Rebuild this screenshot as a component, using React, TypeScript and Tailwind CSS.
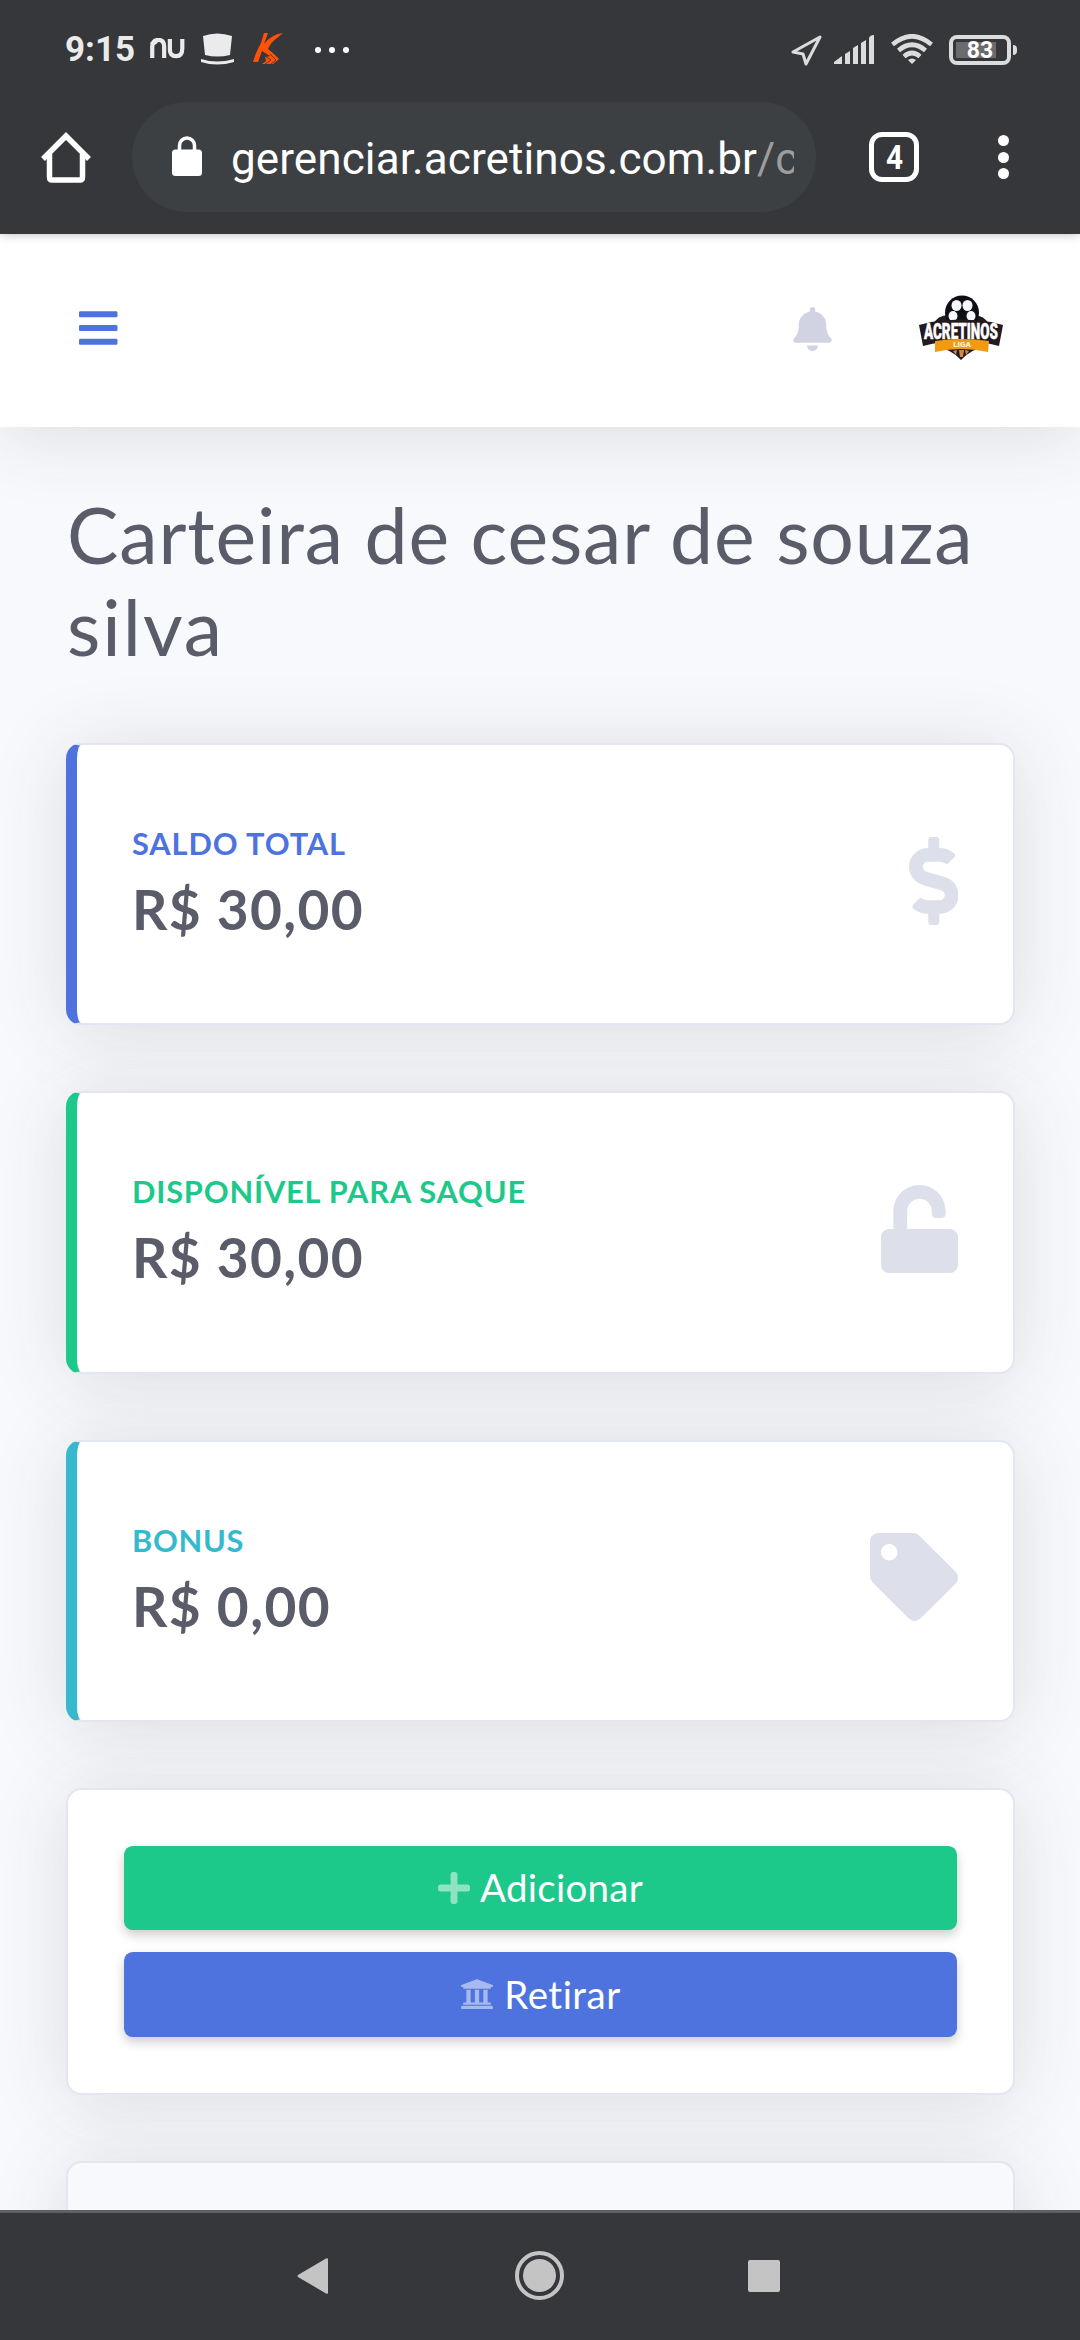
import React from "react";
import { FaBars, FaBell, FaDollarSign, FaUnlock, FaTag, FaPlus, FaUniversity } from "react-icons/fa";

const Fit = ({ text, w, className }: { text: string; w: number; className: string }) => {
  const ref = React.useRef<HTMLSpanElement>(null);
  const [ls, setLs] = React.useState(0);
  React.useLayoutEffect(() => {
    if (ref.current) setLs((w - ref.current.getBoundingClientRect().width) / text.length);
  }, []);
  return (
    <span ref={ref} className={"inline-block whitespace-pre " + className} style={{ letterSpacing: ls }}>
      {text}
    </span>
  );
};

function StatusBar() {
  return (
    <div className="flex h-[99px] items-center pl-[65px] pr-[63px] text-[#ebebeb]">
      <Fit text="9:15" w={70} className="text-[35px] leading-none font-bold" />
      <svg className="-mt-[2px] ml-[14px] h-[21px] w-[37px]" viewBox="0 0 37 22" fill="none" stroke="currentColor">
        <path d="M2.500 21V10Q2.500 2 9 2Q15 2 15 9V21M1 7Q6 5 9 1" strokeWidth="4.400" />
        <path d="M21 1V12Q21 19 27.500 19Q34 19 34 11V1" strokeWidth="4.400" />
      </svg>
      <svg className="-mt-[1px] ml-[15px] h-8 w-[33px]" viewBox="0 0 33 32" fill="currentColor">
        <path d="M2 3Q16-2 31 3L29 22Q16 25 4 22Z" />
        <path d="M0 26Q16 31 33 26V29Q16 34 0 29Z" />
      </svg>
      <svg className="-mt-[1px] ml-[19px] h-8 w-[31px]" viewBox="0 0 31 32" fill="#ff5207">
        <path d="M11 0L15 0L11 11Q19 1 30 0L24 5Q18 9 15 16L21 21L26 26L20 31H9L13 28L12 24L17 23L9 18L5 29H0L3 20L8 10Z" />
        <path d="M12 23L18 27L12 31M17 21L23 27L18 31" stroke="#36373b" strokeWidth="0.800" fill="none" />
      </svg>
      <div className="ml-[31px] flex gap-2">
        <i className="size-[6px] rounded-full bg-white" />
        <i className="size-[6px] rounded-full bg-white" />
        <i className="size-[6px] rounded-full bg-white" />
      </div>
      <div className="ml-auto flex items-center">
        <svg className="h-8 w-8" viewBox="0 0 32 32" fill="none" stroke="#dcdcdc" strokeWidth="3" strokeLinejoin="round">
          <path d="M30 3L3 18L13 20L16 30Z" />
        </svg>
        <svg className="ml-3 h-[30px] w-[41px]" viewBox="0 0 41 30" fill="#dcdcdc">
          <path d="M0 27L8 21V29H0ZM11 19L16 16V29H11ZM19 13L24 10V29H19ZM27 8L32 5V29H27ZM35 3Q36 0 40 0V29H35Z" />
        </svg>
        <svg className="ml-4 h-[31px] w-[42px]" viewBox="0 0 42 31" fill="none" stroke="#dcdcdc" strokeWidth="4.600">
          <path d="M1.500 10.500Q21-6 40.500 10.500M7.500 16.500Q21 5 34.500 16.500M13 22.500Q21 15.500 29 22.500" />
          <path d="M17 26Q21 23 25 26L21 30Z" fill="#dcdcdc" stroke="none" />
        </svg>
        <div className="ml-4 flex h-[30px] w-[62px] items-center rounded-[8px] border-4 border-[#dcdcdc] p-[3px]">
          <div className="flex h-4 w-10 items-center justify-center bg-[#6b6b6d] pt-[2px] pl-[8px] text-[23px] leading-none font-bold text-white">
            83
          </div>
        </div>
        <i className="ml-[2px] h-[10px] w-1 rounded-r bg-[#dcdcdc]" />
      </div>
    </div>
  );
}

function BrowserBar() {
  return (
    <div className="flex h-[135px] items-start pt-[3px] text-white">
      <svg className="mt-[30px] ml-[41px] h-[51px] w-[50px]" viewBox="0 0 50 51" fill="none" stroke="white" strokeWidth="5.500">
        <path d="M2 27L25 4L48 27" />
        <path d="M8.500 22V45Q8.500 48 11 48H39Q41.500 48 41.500 45V22" />
      </svg>
      <div className="ml-[41px] flex h-[110px] w-[684px] items-center rounded-full bg-[#3c4043] pt-[2px] pl-[40px]">
        <svg className="-mt-[4px] h-10 w-[30px]" viewBox="0 0 30 40">
          <rect y="13.500" width="30" height="26.500" rx="3.500" fill="white" />
          <path d="M7.500 15V9.500A7.500 7.500 0 0 1 22.500 9.500V15" fill="none" stroke="white" strokeWidth="3.500" />
        </svg>
        <div className="ml-[29px] flex h-[60px] w-[563px] items-center overflow-hidden pt-[2px] text-[44px] leading-none">
          <Fit text="gerenciar.acretinos.com.br" w={526} className="" />
          <span className="text-[#9b9d9f]">/c</span>
        </div>
      </div>
      <div className="mt-[30px] ml-[53px] flex h-[50px] w-[50px] items-center justify-center rounded-[13px] border-[5.500px] border-white text-[33px] leading-none font-bold">
        <span className="scale-x-90">4</span>
      </div>
      <div className="mt-[33px] ml-[79px] flex flex-col gap-[5.500px]">
        <i className="size-[11px] rounded-full bg-white" />
        <i className="size-[11px] rounded-full bg-white" />
        <i className="size-[11px] rounded-full bg-white" />
      </div>
    </div>
  );
}

function Crest() {
  return (
    <svg className="h-[66px] w-[84px]" viewBox="0 0 84 66">
      <path d="M14 30Q18 20 30 20H54Q66 20 70 30L66 52Q52 54 42 65Q32 54 18 52Z" fill="#231a20" />
      <circle cx="43" cy="17.500" r="17" fill="#0e0f14" />
      <g fill="#f4f7fb">
        <ellipse cx="37.500" cy="10.500" rx="5" ry="5.500" />
        <ellipse cx="48.500" cy="10.500" rx="5" ry="5.500" />
        <ellipse cx="34" cy="21" rx="4.500" ry="5" />
        <ellipse cx="52" cy="21" rx="4.500" ry="5" />
      </g>
      <path d="M0 30L12 27Q42 22 72 27L84 30L80 51Q42 41 4 51Z" fill="#231a20" />
      <text x="42" y="43.500" textAnchor="middle" textLength="74" lengthAdjust="spacingAndGlyphs" fontSize="22" fontWeight="900" fill="white" stroke="white" strokeWidth="0.500" fontFamily="Roboto">ACRETINOS</text>
      <path d="M16 46Q42 42 70 46L69 57Q42 51 16 57Z" fill="#f39a13" />
      <text x="43" y="52" textAnchor="middle" fontSize="8" fontWeight="900" fill="#fff2cf" fontFamily="Roboto">LIGA</text>
      <path d="M34 56L38 55L37 60ZM46 55L50 56L47 60ZM40 55H45L44 62H41Z" fill="#d08a45" />
    </svg>
  );
}

const card =
  "rounded-[15.400px] border-2 border-[#e3e6f0] shadow-[0_6.600px_77px_0_rgba(58,59,69,0.15)]";

function Stat(p: { label: string; lw: number; value: string; vw: number; accent: string; icon: React.ReactNode }) {
  return (
    <div className={"flex h-[282.300px] shrink-0 items-center justify-between border-l-[11px] bg-white pr-[55px] pb-[7px] pl-[55px] " + card + " " + p.accent}>
      <div className="flex flex-col items-start pt-[2px]">
        <Fit text={p.label} w={p.lw} className="mb-[9px] text-[30.800px] leading-[46px] font-bold" />
        <Fit text={p.value} w={p.vw} className="text-[55px] leading-[66px] font-bold text-[#5a5c69]" />
      </div>
      <div className="text-[#dddfeb]">{p.icon}</div>
    </div>
  );
}

export default function App() {
  return (
    <div className="flex h-[2340px] w-[1080px] flex-col overflow-hidden bg-[#f8f9fc] font-['Lato',sans-serif]">
      <header className="relative z-20 h-[234px] shrink-0 bg-[#36373b] font-['Roboto',sans-serif] shadow-[0_0_10px_rgba(0,0,0,0.28)]">
        <StatusBar />
        <BrowserBar />
      </header>
      <nav className="relative z-10 flex h-[193px] shrink-0 items-center bg-white pr-[77px] pb-[6px] pl-[79px] shadow-[0_6.600px_77px_0_rgba(58,59,69,0.15)]">
        <FaBars className="h-[44px] w-[38.500px] text-[#4e73df]" />
        <FaBell className="mt-[3px] ml-auto h-[44px] w-[39px] text-[#d1d3e2]" />
        <div className="ml-[87px]">
          <Crest />
        </div>
      </nav>
      <main className="flex min-h-0 flex-1 flex-col gap-[66px] overflow-hidden pt-[61px] pr-[65px] pl-[66px]">
        <h1 className="flex h-[189px] shrink-0 flex-col items-start pl-px text-[77px] leading-[92.400px] text-[#5a5c69]">
          <Fit text="Carteira de cesar de souza " w={927} className="" />
          <Fit text="silva" w={157} className="" />
        </h1>
        <Stat label="SALDO TOTAL" lw={214} value="R$ 30,00" vw={232} accent="border-l-[#4e73df] text-[#4e73df]" icon={<FaDollarSign className="h-[88px] w-[49.500px]" />} />
        <Stat label="DISPONÍVEL PARA SAQUE" lw={394} value="R$ 30,00" vw={232} accent="border-l-[#1cc88a] text-[#1cc88a]" icon={<FaUnlock className="h-[88px] w-[77px]" />} />
        <Stat label="BONUS" lw={112} value="R$ 0,00" vw={199} accent="border-l-[#36b9cc] text-[#36b9cc]" icon={<FaTag className="h-[88px] w-[88px]" />} />
        <div className={"flex h-[307px] shrink-0 flex-col gap-[22px] bg-white px-[56px] pt-[56px] text-[38.500px] text-white " + card}>
          <button className="flex h-[84px] items-center justify-center gap-[10px] rounded-[8.800px] bg-[#1cc88a] shadow-[0_5px_11px_rgba(0,0,0,0.2)]">
            <FaPlus className="h-[38px] w-[32px] opacity-50" />
            <Fit text="Adicionar" w={163} className="" />
          </button>
          <button className="flex h-[85px] items-center justify-center gap-[10px] rounded-[8.800px] bg-[#4e73df] shadow-[0_5px_11px_rgba(0,0,0,0.2)]">
            <FaUniversity className="h-[38px] w-[34px] opacity-50" />
            <Fit text="Retirar" w={117} className="" />
          </button>
        </div>
        <div className={"h-[200px] shrink-0 bg-[#f8f9fc] " + card} />
      </main>
      <footer className="relative z-20 flex h-[130px] shrink-0 items-center border-t-[3px] border-[#5f6064] bg-[#36373b] pb-[2px]">
        <svg className="ml-[297px] h-[38px] w-[31px]" viewBox="0 0 32 38" fill="#c4c4c4">
          <path d="M30 1Q32 0 32 2V36Q32 38 30 37L1 20Q0 19 1 18Z" />
        </svg>
        <svg className="ml-[187px] size-[49px]" viewBox="0 0 49 49">
          <circle cx="24.500" cy="24.500" r="22.500" fill="none" stroke="#c4c4c4" strokeWidth="4" />
          <circle cx="24.500" cy="24.500" r="16.500" fill="#c4c4c4" />
        </svg>
        <i className="ml-[184px] size-8 rounded-[2px] bg-[#c4c4c4]" />
      </footer>
    </div>
  );
}
